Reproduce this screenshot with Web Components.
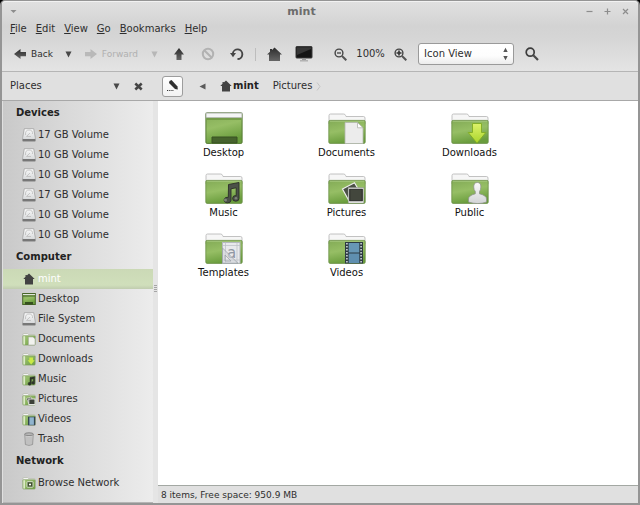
<!DOCTYPE html>
<html lang="en">
<head>
<meta charset="utf-8">
<title>mint</title>
<style>
  html, body { margin: 0; height: 100%; background: #000; }
  body { font: 10px/16px "DejaVu Sans", sans-serif; color: #2e2e2e; }
</style>
</head>
<body>
<file-window></file-window>
<script>
const shade = `<defs>
  <linearGradient id="g" x1="0" y1="0" x2=".3" y2="1"><stop offset="0" stop-color="#83ab56"/><stop offset=".5" stop-color="#96be65"/><stop offset="1" stop-color="#6a9d3d"/></linearGradient>
  <linearGradient id="s" x1="0" y1="0" x2="1" y2="1"><stop offset="0" stop-color="#a5c87a"/><stop offset="1" stop-color="#6f9f44"/></linearGradient>
  <linearGradient id="d" x1="0" y1="0" x2="0" y2="1"><stop offset="0" stop-color="#2c2c2c"/><stop offset="1" stop-color="#666"/></linearGradient>
  <linearGradient id="w" x1="0" y1="0" x2="0" y2="1"><stop offset="0" stop-color="#fafafa"/><stop offset="1" stop-color="#d2d4d6"/></linearGradient>
  <linearGradient id="y" x1="0" y1="0" x2="0" y2="1"><stop offset="0" stop-color="#ddf26a"/><stop offset="1" stop-color="#a9d42c"/></linearGradient>
</defs>`;
const folder = `<path d="M1 12V3.500Q1 2 2.500 2H15.500Q17 2 17.500 3.300L18 4.500H35.500Q37 4.500 37 6V12Z" fill="#f6f6f6" stroke="#b4b4b4" stroke-width=".8"/>
  <rect x=".8" y="8.400" width="36.400" height="23" rx="1.300" fill="url(#g)" stroke="#6a8f45" stroke-width=".8"/>
  <path d="M1.800 9.400H36.200" stroke="#a9ca82" stroke-width=".7"/>`;
const sm = `<path d="M1 6V2.200Q1 1.500 1.700 1.500H5.500L6.500 2.500H12.500Q13 2.500 13 3.200V6Z" fill="#f4f4f4" stroke="#b5b9ab" stroke-width=".7"/>
  <rect x=".9" y="3.800" width="12.200" height="9.200" rx=".7" fill="url(#s)" stroke="#7d9c5d" stroke-width=".7"/>
  <path d="M2.200 4.200V12.600" stroke="#dbe9c8" stroke-width="1.800"/>`;
const note = `<path d="M23.500 12.500 34 10.500V26.300A3.200 2.800 0 1 1 31.200 23.600V15.800L26 16.800V28.200A3.400 2.800 0 1 1 23.300 25.300Z" fill="#4b5148" stroke="#2b2f28" stroke-width=".9"/><circle cx="20.500" cy="28" r="1.500" fill="#7c8277"/><circle cx="31" cy="26.300" r="1.300" fill="#7c8277"/>`;
const mag = `<circle cx="5" cy="5" r="3.900" fill="none" stroke="#444" stroke-width="1.400"/><path d="M8 8 12.300 12.300" stroke="#555" stroke-width="2"/>`;
const house = `<path d="M7.500 .5 15 7.500H13V14H2V7.500H0L3 4.700V2H5V2.900Z" fill="url(#d)"/>`;
const ICONS = {
  desktop: [38, 32, `<rect x=".9" y=".9" width="36.200" height="30.500" rx="1.200" fill="url(#g)" stroke="#567b34"/><rect x="1" y="1" width="36" height="4.800" fill="#f4f5f5" stroke="#9da39a" stroke-width=".8"/><path d="M2 7H36" stroke="#6c9541" stroke-width="1.500"/><path d="M7 31V25H32V31Z" fill="#46632d" stroke="#395222"/>`],
  documents: [38, 32, folder + `<path d="M17 10.500H29.500L35 15.800V31.500H17Z" fill="#ececec" stroke="#b3b8ae" stroke-width=".8"/><path d="M29.500 10.500V15.800H35Z" fill="#fff" stroke="#a8aca5" stroke-width=".7"/>`],
  downloads: [38, 32, folder + `<path d="M21.500 11.500H30.500V20.500H34.800L26 31.200 17.200 20.500H21.500Z" fill="url(#y)" stroke="#7fac22" stroke-width=".9"/>`],
  music: [38, 32, folder + note],
  pictures: [38, 32, folder + `<path d="M14.500 17 26.500 10.700 32.500 21 20.500 28Z" fill="#4a5046" stroke="#ededed" stroke-width="1.200"/><rect x="20.200" y="15.700" width="15.600" height="15.300" fill="#fff" stroke="#8e938b" stroke-width=".6"/><rect x="21.700" y="17.200" width="12.600" height="11.600" fill="#43473d" stroke="#222"/>`],
  public: [38, 32, folder + `<path d="M26.300 10.500Q30 10.500 29.900 15 29.700 18.200 28.500 19.500V21.800Q35.500 23.500 35.500 27V30Q27 33.200 17.500 30V27Q17.500 23.500 24.300 21.800V19.500Q22.800 18 22.700 15 22.700 10.500 26.300 10.500Z" fill="url(#w)" stroke="#8f948c" stroke-width=".8"/>`],
  templates: [38, 32, folder + `<rect x="17.500" y="10.500" width="17.500" height="20.800" fill="#e8e9ec" stroke="#b5b9be"/><path d="M20.500 10.500V31M32 10.500V31M17.500 13.500H35M17.500 28H35" stroke="#b9bec4" stroke-width=".7"/><text x="22" y="26" font-family="DejaVu Sans, sans-serif" font-size="15" fill="#9098a4">a</text><path d="M17.500 16V31.300H33ZM20 23V29H26Z" fill="#d0d3d8" fill-opacity=".6" stroke="#989da5" stroke-width=".7" fill-rule="evenodd"/>`],
  videos: [38, 32, folder + `<rect x="17" y="10" width="18" height="21.500" fill="#2d3a42"/><rect x="20.700" y="11" width="10.600" height="9.500" fill="#6797b5"/><rect x="20.700" y="21.500" width="10.600" height="9.500" fill="#5f8faf"/><path d="M18.900 11V31M33.100 11V31" stroke="#c3ccd0" stroke-width="1.700" stroke-dasharray="1.600 1.400"/>`],
  sDesktop: [14, 14, `<rect x=".7" y="1.500" width="12.600" height="11" fill="url(#g)" stroke="#476529"/><path d="M1 2.500H13" stroke="#e1e6dc"/><path d="M1 4H13" stroke="#486430"/><rect x="3" y="10" width="8" height="2.500" fill="#36501f"/>`],
  sDrive: [14, 14, `<path d="M2.300 .7H11.700L13.300 9.500V13H.7V9.500Z" fill="url(#w)" stroke="#a2a2a2" stroke-width=".8"/><path d="M.7 11H13.300V13.300H.7Z" fill="#777"/><path d="M3.500 7Q3 2 7 2 11 2 10.500 6M8 5 4.500 8.500H9" fill="none" stroke="#bdbdbd" stroke-width=".8"/>`],
  sDocuments: [14, 14, sm + `<path d="M6.500 5H11L13 7V13H6.500Z" fill="#f1f2ee" stroke="#a8ada0" stroke-width=".6"/>`],
  sDownloads: [14, 14, sm + `<path d="M7.300 5.500H11V8.200H12.700L9.200 12.500 5.600 8.200H7.300Z" fill="#c9ea45"/>`],
  sMusic: [14, 14, sm + `<path d="M8 5.500 12.700 4.700V10.700A1.500 1.400 0 1 1 11.400 9.500V6.800L9.300 7.200V11.700A1.600 1.400 0 1 1 8 10.400Z" fill="#2e3529" stroke="#2e3529" stroke-width=".5"/>`],
  sPictures: [14, 14, sm + `<path d="M4.500 6.500 9 5 11 9 6.500 11Z" fill="#3d4437" stroke="#dfe3da" stroke-width=".7"/><rect x="6.800" y="7" width="6.200" height="5.500" fill="#3c4138" stroke="#f2f2f2" stroke-width=".9"/>`],
  sVideos: [14, 14, sm + `<rect x="6" y="4.700" width="7.300" height="8.600" fill="#33444f"/><rect x="7.400" y="5.300" width="4.500" height="7.500" fill="#8fb4ce"/>`],
  sTrash: [14, 14, `<path d="M2.800 2 3.400 12.500Q7 14.200 10.600 12.500L11.200 2Z" fill="#d3d3d3" stroke="#888" stroke-width=".8"/><path d="M5 4.500V12M7 4.800V12.500M9 4.500V12" stroke="#9d9d9d" stroke-width=".7"/><ellipse cx="7" cy="2.200" rx="4.300" ry="1.400" fill="#b9b9b9" stroke="#777" stroke-width=".8"/>`],
  sNetwork: [14, 14, sm + `<rect x="5" y="5.700" width="6" height="5.500" rx=".5" fill="#3d4f2c" stroke="#e4ecda" stroke-width=".9"/><circle cx="8" cy="8.500" r="1.100" fill="#fff"/>`],
  sHome: [14, 14, `<path d="M7 1.500 12.700 7H11V12.500H3V7H1.300L3.500 4.800V3H4.800V3.600Z" fill="#424242"/>`],
  home: [15, 14, house],
  back: [12, 12, `<path d="M0 6 6.500 1V4H12V8.200H6.500V11Z" fill="url(#d)"/>`],
  forward: [12, 12, `<path d="M12 6 5.500 1V4H0V8.200H5.500V11Z" fill="#b9b9b9"/>`],
  up: [12, 12, `<path d="M6 0 11 6.500H8.500V12H3.500V6.500H1Z" fill="url(#d)"/>`],
  stop: [14, 14, `<circle cx="7" cy="7" r="5.200" fill="none" stroke="#b2b2b2" stroke-width="2"/><path d="M3.500 3.500 10.500 10.500" stroke="#b2b2b2" stroke-width="2"/>`],
  refresh: [14, 14, `<path d="M2.800 6.500A4.800 4.800 0 1 1 7.500 12" fill="none" stroke="#454545" stroke-width="1.900"/><path d="M0 6H6L3 10.200Z" fill="#454545"/>`],
  monitor: [18, 16, `<rect x="1" y=".5" width="16" height="11.500" rx=".7" fill="#151515" stroke="#3a3a3a"/><path d="M2 1.300H16V3L2 9Z" fill="#363636"/><path d="M7 12.500H11V14H7Z" fill="#999"/><path d="M5 14.800H13" stroke="#aaa" stroke-width="1.300"/>`],
  zoomOut: [13, 13, mag + `<path d="M3 5H7" stroke="#444" stroke-width="1.300"/>`],
  zoomIn: [13, 13, mag + `<path d="M2.500 5H7.500M5 2.500V7.500" stroke="#333" stroke-width="1.600"/>`],
  search: [14, 14, `<circle cx="5.200" cy="5.200" r="4" fill="none" stroke="#3c3c3c" stroke-width="1.700"/><path d="M8.300 8.300 13 13" stroke="#4a4a4a" stroke-width="2.200"/>`],
  down: [7, 7, `<path d="M.5 .5H6.500L3.500 6.500Z" fill="currentColor" fill-opacity=".85"/>`],
  left: [7, 7, `<path d="M6.500 .5V6.500L.5 3.500Z" fill="#5a5a5a"/>`],
  chevron: [5, 9, `<path d="M1 .5 4 4.500 1 8.500" fill="none" stroke="#c4c4c4"/>`],
  cross: [9, 9, `<path d="M1.300 1.500 7.700 7.500M7.700 1.500 1.300 7.500" stroke="#454545" stroke-width="2.500"/>`],
  pencil: [12, 12, `<path d="M2.500 1 4.500 0 10.500 6.500 10.800 9.500 8 9 2 3Z" fill="#2f2f2f"/><path d="M0 10.500H7" stroke="#333" stroke-width="1.200" stroke-dasharray="1.200 1"/>`],
  updown: [5, 14, `<path d="M.3 5 2.500 .8 4.700 5ZM.3 9 2.500 13.200 4.700 9Z" fill="#555"/>`],
  wMenu: [7, 5, `<path d="M.5 1H6.500L3.500 4Z" fill="#8d8d8d"/>`],
  wMin: [7, 7, `<path d="M.5 3.500H6.500" stroke="#8d8d8d" stroke-width="1.200"/>`],
  wMax: [7, 7, `<path d="M.5 3.500H6.500M3.500 .5V6.500" stroke="#8d8d8d" stroke-width="1.200"/>`],
  wClose: [7, 7, `<path d="M1 1 6 6M6 1 1 6" stroke="#8d8d8d" stroke-width="1.200"/>`],
};
const BUTTON = `button { font: inherit; color: inherit; background: none; border: 0; margin: 0; padding: 0; display: flex; align-items: center; justify-content: center; }`;

function define(tag, css, html) {
  customElements.define(tag, class extends HTMLElement {
    constructor() {
      super();
      this.attachShadow({ mode: 'open' }).innerHTML = `<style>* { box-sizing: border-box; }${css}</style>` + (typeof html === 'string' ? html : '');
    }
    connectedCallback() {
      if (typeof html === 'function' && !this.done) {
        this.done = true;
        this.shadowRoot.innerHTML += html(this);
      }
    }
  });
}

define('ui-icon', `:host { display: block; flex: none; } svg { display: block; }`, el => {
  const [w, h, body] = ICONS[el.getAttribute('name')];
  return `<svg width="${w}" height="${h}" viewBox="0 0 ${w} ${h}" aria-hidden="true">${shade}${body}</svg>`;
});

define('tool-button', `
  :host { display: flex; width: 29px; font-size: 9px; }
  :host([wide]) { width: auto; }
  :host([drop]) { width: 20px; }
  :host([off]) { color: #b0b0b0; }
  ${BUTTON} button { width: 100%; gap: 5px; }
  :host([wide]) button { padding: 0 6px; }`,
  el => `<button type="button" aria-label="${el.getAttribute('label')}" ${el.hasAttribute('off') ? 'disabled' : ''}><ui-icon name="${el.getAttribute('icon')}"></ui-icon><slot></slot></button>`);

define('title-bar', `
  :host { display: grid; grid-template-columns: auto 1fr auto; align-items: center; height: 19px; padding: 0 9px 0 8px; }
  h1 { margin: 0; font-size: 11px; line-height: 16px; text-align: center; color: #6c6c6c; }
  .end { display: flex; gap: 11px; }
  ${BUTTON}`, `
  <button type="button" aria-label="Window menu"><ui-icon name="wMenu"></ui-icon></button>
  <h1><slot></slot></h1>
  <div class="end">
    <button type="button" aria-label="Minimize"><ui-icon name="wMin"></ui-icon></button>
    <button type="button" aria-label="Maximize"><ui-icon name="wMax"></ui-icon></button>
    <button type="button" aria-label="Close"><ui-icon name="wClose"></ui-icon></button>
  </div>`);

define('menu-bar', `
  :host { display: flex; gap: 9px; padding: 0 8px; height: 16px; }
  ${BUTTON} button { display: block; } u { text-underline-offset: 1px; }`, `
  <button type="button"><u>F</u>ile</button><button type="button"><u>E</u>dit</button><button type="button"><u>V</u>iew</button><button type="button"><u>G</u>o</button><button type="button"><u>B</u>ookmarks</button><button type="button"><u>H</u>elp</button>`);

define('tool-bar', `
  :host { display: flex; align-items: center; height: 34px; padding: 0 6px; }
  .sep { width: 1px; height: 13px; background: #bdbdbd; margin: 0 4px; }
  .zoom { margin-left: 8px; }
  output { width: 31px; text-align: center; }
  .pick { display: grid; align-items: center; width: 96px; margin: 0 3px; }
  .pick > * { grid-area: 1 / 1; }
  .pick ui-icon { justify-self: end; margin-right: 6px; pointer-events: none; }
  select { appearance: none; height: 22px; width: 100%; margin: 0; padding: 0 16px 0 5px; font: inherit; color: inherit; border: 1px solid #9a9a9a; border-radius: 3px; background: linear-gradient(#fff, #fdfdfd 60%, #ececec); }`, `
  <tool-button wide icon="back" label="Back">Back</tool-button>
  <tool-button drop icon="down" label="Back history"></tool-button>
  <tool-button wide off icon="forward" label="Forward">Forward</tool-button>
  <tool-button drop off icon="down" label="Forward history"></tool-button>
  <tool-button icon="up" label="Up"></tool-button>
  <tool-button off icon="stop" label="Stop"></tool-button>
  <tool-button icon="refresh" label="Reload"></tool-button>
  <span class="sep"></span>
  <tool-button icon="home" label="Home"></tool-button>
  <tool-button icon="monitor" label="Computer"></tool-button>
  <tool-button class="zoom" icon="zoomOut" label="Zoom out"></tool-button>
  <output>100%</output>
  <tool-button icon="zoomIn" label="Zoom in"></tool-button>
  <div class="pick"><select aria-label="View as"><option>Icon View</option><option>List View</option><option>Compact View</option></select><ui-icon name="updown"></ui-icon></div>
  <tool-button icon="search" label="Search"></tool-button>`);

define('places-header', `
  :host { display: flex; align-items: center; padding: 0 10px 0 8px; height: 28px; }
  span { flex: 1; }
  ${BUTTON} div { display: flex; gap: 14px; }`, `
  <span>Places</span>
  <div><button type="button" aria-label="Choose side pane"><ui-icon name="down"></ui-icon></button>
  <button type="button" aria-label="Close side pane"><ui-icon name="cross"></ui-icon></button></div>`);

define('path-bar', `
  :host { display: flex; align-items: center; height: 28px; padding-left: 4px; }
  ${BUTTON}
  .edit { width: 21px; height: 21px; border: 1px solid #9d9d9d; border-radius: 3px; background: linear-gradient(#fff, #f2f2f2); }
  .prev { margin: 0 13px 0 16px; }
  .here { font-weight: bold; color: #222; }
  .next { margin-left: 14px; gap: 4px; }`, `
  <button class="edit" type="button" aria-label="Edit location"><ui-icon name="pencil"></ui-icon></button>
  <button class="prev" type="button" aria-label="Scroll left"><ui-icon name="left"></ui-icon></button>
  <button class="here" type="button"><ui-icon name="sHome"></ui-icon>mint</button>
  <button class="next" type="button">Pictures<ui-icon name="chevron"></ui-icon></button>`);

define('place-item', `
  :host { display: block; }
  a { display: flex; align-items: center; gap: 2px; height: 20px; padding-left: 19px; color: inherit; text-decoration: none; }
  :host([current]) a { color: #fff; background: linear-gradient(#cbd9b6, #d0dfbb 80%, #c0ccaf); }`,
  el => `<a href="#${el.getAttribute('icon')}"><ui-icon name="${el.getAttribute('icon')}"></ui-icon><slot></slot></a>`);

define('place-group', `
  :host { display: block; }
  h2 { margin: 0; padding-left: 13px; font-size: 10px; line-height: 24px; color: #222; }`,
  el => `<h2>${el.getAttribute('label')}</h2><slot></slot>`);

define('places-list', `
  :host { display: block; margin-left: 1px; border-bottom: 1px solid #b5b5b5; background: linear-gradient(to right, #c9c9c9, #dadada 45%, #ececec); }`, `
  <nav aria-label="Places">
  <place-group label="Devices">
    <place-item icon="sDrive">17 GB Volume</place-item><place-item icon="sDrive">10 GB Volume</place-item>
    <place-item icon="sDrive">10 GB Volume</place-item><place-item icon="sDrive">17 GB Volume</place-item>
    <place-item icon="sDrive">10 GB Volume</place-item><place-item icon="sDrive">10 GB Volume</place-item>
  </place-group>
  <place-group label="Computer">
    <place-item icon="sHome" current>mint</place-item><place-item icon="sDesktop">Desktop</place-item>
    <place-item icon="sDrive">File System</place-item><place-item icon="sDocuments">Documents</place-item>
    <place-item icon="sDownloads">Downloads</place-item><place-item icon="sMusic">Music</place-item>
    <place-item icon="sPictures">Pictures</place-item><place-item icon="sVideos">Videos</place-item>
    <place-item icon="sTrash">Trash</place-item>
  </place-group>
  <place-group label="Network"><place-item icon="sNetwork">Browse Network</place-item></place-group>
  </nav>`);

define('pane-grip', `
  :host { display: flex; flex-direction: column; align-items: center; justify-content: center; gap: 1px; background: #e5e5e5; padding-bottom: 28px; }
  i { width: 3px; height: 1px; background: #a5a5a5; }`, `<i></i><i></i><i></i><i></i>`);

define('folder-item', `
  :host { display: flex; flex-direction: column; align-items: center; gap: 1px; color: #111; }`,
  el => `<ui-icon name="${el.getAttribute('icon')}"></ui-icon><slot></slot>`);

define('folder-grid', `
  :host { display: grid; grid-template-columns: repeat(auto-fill, 123px); gap: 11px 0; align-content: start; padding: 11px 0 0 4px; background: #fff; }`, `
  <folder-item icon="desktop">Desktop</folder-item><folder-item icon="documents">Documents</folder-item>
  <folder-item icon="downloads">Downloads</folder-item><folder-item icon="music">Music</folder-item>
  <folder-item icon="pictures">Pictures</folder-item><folder-item icon="public">Public</folder-item>
  <folder-item icon="templates">Templates</folder-item><folder-item icon="videos">Videos</folder-item>`);

define('status-bar', `
  :host { display: flex; align-items: center; height: 18px; padding: 0 3px; border-top: 1px solid #a3a8a3; font-size: 9px; }`, `<slot></slot>`);

define('file-window', `
  :host { display: grid; grid-template: auto auto 1fr auto / 151px 5px 1fr; min-height: 100vh; box-sizing: border-box;
    border: 2px solid #959595; border-top-width: 1px; border-radius: 5px 5px 0 0; background: #e0e0e0; }
  header { grid-column: 1 / -1; border-top: 1px solid #f2f2f2; border-bottom: 1px solid #b5b5b5; border-radius: 4px 4px 0 0; background: linear-gradient(#e0e0e0, #d3d3d3 35%, #d5d5d5 50%, #e4e4e4); }
  places-header, path-bar { border-bottom: 1px solid #a8a8a8; height: 29px; }
  places-header { grid-column: 1 / 3; padding-right: 15px; }
  places-list { grid-area: 3 / 1 / 5 / 2; }
  pane-grip { grid-area: 3 / 2 / 5 / 3; }
  folder-grid { grid-area: 3 / 3; }
  status-bar { grid-area: 4 / 3; }`, `
  <header><title-bar>mint</title-bar><menu-bar></menu-bar><tool-bar></tool-bar></header>
  <places-header></places-header><path-bar></path-bar>
  <places-list></places-list><pane-grip></pane-grip>
  <folder-grid></folder-grid>
  <status-bar>8 items, Free space: 950.9 MB</status-bar>`);
</script>
</body>
</html>
